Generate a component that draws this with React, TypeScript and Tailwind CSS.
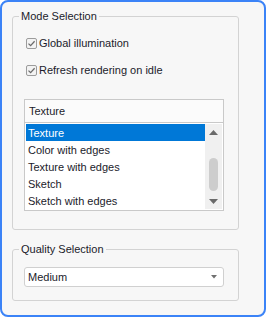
import * as React from 'react';

// --------------------------------
// Data
// --------------------------------
const renderModes = ['Texture', 'Color with edges', 'Texture with edges', 'Sketch', 'Sketch with edges'];

// --------------------------------
// Small parts
// --------------------------------
const CheckBox = ({ label }: { label: string }) => (
  <label className="flex items-center h-[16px] ml-[2px] gap-[2px]">
    <span className="w-[11px] h-[11px] rounded-[2px] border border-[#9c9c9c] bg-[#f3f3f3] flex items-center justify-center">
      <svg width="9" height="9" viewBox="0 0 9 9">
        <path d="M1.5 4.6 L3.6 6.6 L7.6 2.2" fill="none" stroke="#6b6b6b" strokeWidth="1.3" />
      </svg>
    </span>
    <span className="text-[#1b1b2b]">{label}</span>
  </label>
);

const Arrow = ({ down }: { down?: boolean }) => (
  <svg width="9" height="5" viewBox="0 0 9 5">
    <path d={down ? 'M0 0 H9 L4.5 5 Z' : 'M0 5 H9 L4.5 0 Z'} fill="#6a6a6a" />
  </svg>
);

// --------------------------------
// App
// --------------------------------
export default function App() {
  const [selected, setSelected] = React.useState(0);

  return (
    <div
      className="w-[266px] h-[317px] border-2 border-[#3b83f7] rounded-[8px] bg-[#f7f7f7] px-[10px] pt-[6px] text-[11px] leading-[16px] text-[#1b1b2b]"
      style={{ fontFamily: '"Liberation Sans", Arial, sans-serif' }}
    >
      <fieldset className="w-[227px] border border-[#d3d3d3] rounded-[3px] pb-[18px]">
        <legend className="ml-[6px] px-[2px]">Mode Selection</legend>
        <div className="pl-[11px]">
          <div className="mt-[11px] flex flex-col gap-[11px]">
            <CheckBox label="Global illumination" />
            <CheckBox label="Refresh rendering on idle" />
          </div>

          <div className="mt-[21px] w-[200px]">
            <div className="h-[23px] border border-b-0 border-[#c9c9c9] bg-[#fbfbfb] pl-[4px] flex items-center">
              {renderModes[selected]}
            </div>
            <div className="border border-[#c9c9c9] bg-white p-[1px] flex">
              <ul className="flex-1">
                {renderModes.map((m, i) => (
                  <li
                    key={m}
                    onClick={() => setSelected(i)}
                    className={
                      i === selected
                        ? 'h-[17px] pl-[2px] flex items-center bg-[#0078d7] text-white'
                        : 'h-[17px] pl-[2px] flex items-center'
                    }
                  >
                    {m}
                  </li>
                ))}
              </ul>
              <div className="w-[17px] bg-[#f0f0f0] flex flex-col items-center pt-[6px] pb-[5px]">
                <Arrow />
                <div className="mt-[23px] w-[9px] h-[33px] rounded-full bg-[#cdcdcd]" />
                <div className="mt-auto">
                  <Arrow down />
                </div>
              </div>
            </div>
          </div>
        </div>
      </fieldset>

      <fieldset className="mt-[11px] w-[227px] border border-[#d3d3d3] rounded-[3px] pb-[13px]">
        <legend className="ml-[6px] px-[2px]">Quality Selection</legend>
        <div className="pl-[11px]">
          <div className="mt-[10px] w-[200px] h-[20px] border border-[#d0d0d0] rounded-[3px] bg-white pl-[3px] pr-[6px] flex items-center justify-between">
            <span>Medium</span>
            <svg width="6" height="4" viewBox="0 0 6 4">
              <path d="M0 0 H6 L3 3.5 Z" fill="#707070" />
            </svg>
          </div>
        </div>
      </fieldset>
    </div>
  );
}
